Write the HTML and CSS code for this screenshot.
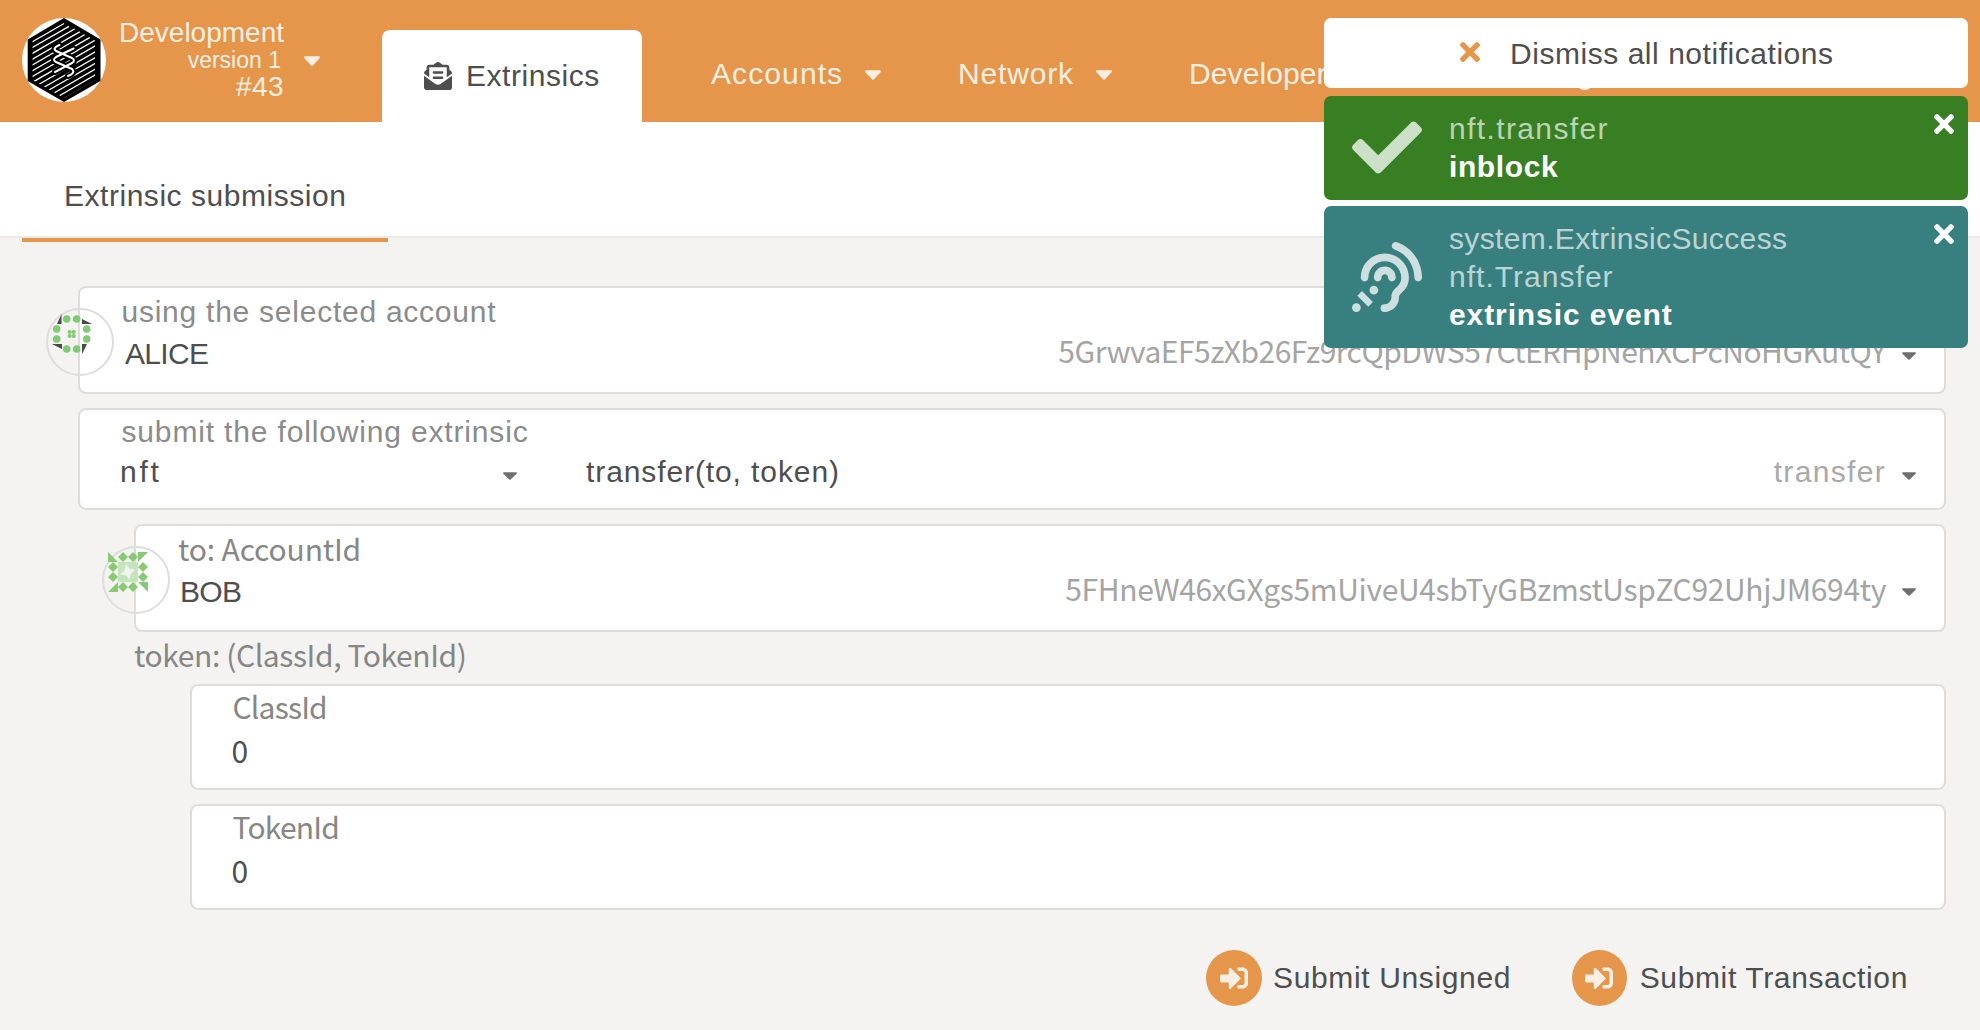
FILE: index.html
```html
<!DOCTYPE html>
<html lang="en">
<head>
<meta charset="utf-8">
<title>Extrinsics</title>
<link rel="stylesheet" href="styles.css">
</head>
<body>
<svg class="defs" width="0" height="0" aria-hidden="true">
  <symbol id="caret" viewBox="9 188 302 176" preserveAspectRatio="none"><path d="M31.3 192h257.3c17.8 0 26.7 21.5 14.1 34.1L174.1 354.8c-7.800 7.800-20.500 7.800-28.300 0L17.200 226.100C4.600 213.500 13.500 192 31.300 192z"/></symbol>
  <symbol id="times" viewBox="0 80 352 352"><path d="M242.720 256l100.070-100.070c12.280-12.280 12.280-32.190 0-44.480l-22.240-22.240c-12.280-12.280-32.190-12.280-44.480 0L176 189.280 75.930 89.210c-12.280-12.280-32.190-12.280-44.480 0L9.210 111.450c-12.280 12.280-12.280 32.190 0 44.480L109.280 256 9.210 356.070c-12.280 12.280-12.280 32.190 0 44.480l22.240 22.240c12.280 12.280 32.200 12.280 44.480 0L176 322.720l100.070 100.070c12.280 12.280 32.200 12.280 44.480 0l22.240-22.240c12.280-12.280 12.280-32.190 0-44.480L242.720 256z"/></symbol>
  <symbol id="sign-in" viewBox="0 0 512 512"><path d="M416 448h-84c-6.600 0-12-5.400-12-12v-40c0-6.600 5.400-12 12-12h84c17.700 0 32-14.300 32-32V160c0-17.700-14.300-32-32-32h-84c-6.600 0-12-5.400-12-12V76c0-6.600 5.400-12 12-12h84c53 0 96 43 96 96v192c0 53-43 96-96 96zm-47-201L201 79c-15-15-41-4.500-41 17v96H24c-13.300 0-24 10.700-24 24v96c0 13.300 10.700 24 24 24h136v96c0 21.500 26 32 41 17l168-168c9.300-9.400 9.300-24.600 0-34z"/></symbol>
</svg>

<header class="topbar">
  <svg class="logo" viewBox="0 0 84 84">
    <defs><clipPath id="inner"><path d="M42 4.500 73 22.500V62L42 80 10.500 62V22.500z"/></clipPath></defs>
    <circle cx="42" cy="42" r="42" fill="#fff"/>
    <path d="M42 0 78.500 21.500V63L42 84 5.700 63V21.500z"/>
    <g clip-path="url(#inner)" stroke="#fff" stroke-width="1.300">
      <path d="M10 24 42 5.500M10 29.800 47 8.400M10 35.600 53 10.700M10 41.400 58 13.600M10 47.200 63 16.500M10 53 68 19.400M10 58.800 74 21.700M10 64.600 74 27.500M14 68 74 33.300M19 71 74 39.100M24 73.800 74 44.900M29 76.800 74 50.700M34 79.700 74 56.500M40 82 74 62.300"/>
    </g>
    <g fill="none" stroke-linecap="round" stroke-linejoin="round">
      <g stroke="#000" stroke-width="6"><path d="M37.500 27Q30 30 34 33L50 40Q54 42.500 50 45L33 54"/><path d="M51.500 30.500 34 39Q30 42 34 44L50 51Q54 55 46 58"/></g>
      <g stroke="#fff" stroke-width="2"><path d="M37.500 27Q30 30 34 33L50 40Q54 42.500 50 45L33 54"/><path d="M51.500 30.500 34 39Q30 42 34 44L50 51Q54 55 46 58"/></g>
    </g>
  </svg>
  <div class="chain">
    <div class="chain-name">Development</div>
    <div class="chain-version">version 1</div>
    <div class="chain-block">#43</div>
  </div>
  <svg class="caret caret-chain"><use href="#caret"/></svg>
  <a class="tab-active">
    <svg class="tab-icon" viewBox="0 0 512 512"><path d="M176 216h160c8.840 0 16-7.160 16-16v-16c0-8.840-7.160-16-16-16H176c-8.840 0-16 7.160-16 16v16c0 8.840 7.160 16 16 16zm-16 80c0 8.840 7.160 16 16 16h160c8.840 0 16-7.160 16-16v-16c0-8.840-7.160-16-16-16H176c-8.840 0-16 7.160-16 16v16zm96 121.130c-16.420 0-32.840-5.060-46.860-15.190L0 250.860V464c0 26.510 21.490 48 48 48h416c26.510 0 48-21.490 48-48V250.860L302.860 401.940c-14.020 10.120-30.440 15.190-46.860 15.190zm237.610-254.180c-8.850-6.940-17.240-13.470-29.610-22.810V96c0-26.510-21.490-48-48-48h-77.550c-3.040-2.200-5.870-4.260-9.040-6.560C312.600 29.170 279.200-.35 256 0c-23.200-.35-56.590 29.170-73.410 41.440-3.170 2.300-6 4.360-9.040 6.560H96c-26.510 0-48 21.490-48 48v44.140c-12.370 9.330-20.760 15.870-29.610 22.810A47.995 47.995 0 0 0 0 200.720v10.650l96 69.350V96h320v184.720l96-69.350v-10.650c0-14.740-6.780-28.670-18.390-37.770z"/></svg>
    <span class="t-std">Extrinsics</span>
  </a>
  <nav class="nav">
    <a class="nav-item nav-accounts"><span>Accounts</span><svg class="caret"><use href="#caret"/></svg></a>
    <a class="nav-item nav-network"><span>Network</span><svg class="caret"><use href="#caret"/></svg></a>
    <a class="nav-item nav-developer"><span>Developer</span><svg class="caret"><use href="#caret"/></svg></a>
    <a class="nav-item"><span>Settings</span></a>
  </nav>
</header>

<div class="subbar"><a class="subtab">Extrinsic submission</a></div>

<main class="form">
  <section class="card card-account">
    <div class="identicon">
      <svg width="40" height="40" viewBox="0 0 40 40">
        <path fill="#484848" d="M9.500 0V10H5zM30 5 40 10H30zM0 30H10V35zM30 30H35L30 40z"/>
        <g fill="#7fcb74"><circle cx="14.700" cy="5" r="3.800"/><circle cx="24.700" cy="5" r="3.800"/><circle cx="4.700" cy="15" r="3.800"/><circle cx="4.700" cy="25" r="3.800"/><circle cx="34.700" cy="15" r="3.800"/><circle cx="34.700" cy="25" r="3.800"/><circle cx="14.700" cy="35" r="3.800"/><circle cx="24.700" cy="35" r="3.800"/><circle cx="17.700" cy="18" r="2.100"/><circle cx="21.700" cy="18" r="2.100"/><circle cx="17.700" cy="22" r="2.100"/><circle cx="21.700" cy="22" r="2.100"/></g>
      </svg>
    </div>
    <div class="label">using the selected account</div>
    <div class="row">
      <span class="value caps">ALICE</span>
      <span class="address addr-alice">5GrwvaEF5zXb26Fz9rcQpDWS57CtERHpNehXCPcNoHGKutQY</span>
      <svg class="caret-small"><use href="#caret"/></svg>
    </div>
  </section>

  <section class="card card-call">
    <div class="label l-submit">submit the following extrinsic</div>
    <div class="row">
      <span class="value module">nft</span>
      <svg class="caret-small"><use href="#caret"/></svg>
      <span class="value method">transfer(to, token)</span>
      <span class="method-name">transfer</span>
      <svg class="caret-small"><use href="#caret"/></svg>
    </div>
  </section>

  <div class="params">
    <section class="card card-to">
      <div class="identicon">
        <svg width="40" height="40" viewBox="0 0 40 40">
          <path fill="#87ca73" d="M0 0 10 10H0zM30 0H40L30 10zM0 40 10 30V40zM30 30H40V40z"/>
          <path fill="#87ca73" d="M15 0l5 5-5 5-5-5zM25 0l5 5-5 5-5-5zM5 10l5 5-5 5-5-5zM5 20l5 5-5 5-5-5zM35 10l5 5-5 5-5-5zM35 20l5 5-5 5-5-5zM15 30l5 5-5 5-5-5zM25 30l5 5-5 5-5-5z"/>
          <path fill="#c3e5b9" fill-rule="evenodd" d="M10 10H30V30H10zM18 12 16.500 18.500 12 22 18.500 23.500 21 28 23 21.500 28 18 21.500 16.500z"/>
        </svg>
      </div>
      <div class="label typed l-to">to: AccountId</div>
      <div class="row">
        <span class="value caps">BOB</span>
        <span class="address addr-bob">5FHneW46xGXgs5mUiveU4sbTyGBzmstUspZC92UhjJM694ty</span>
        <svg class="caret-small"><use href="#caret"/></svg>
      </div>
    </section>

    <div class="typed token-label">token: (ClassId, TokenId)</div>

    <div class="tuple">
      <section class="card card-num">
        <div class="label typed l-id">ClassId</div>
        <div class="number">0</div>
      </section>
      <section class="card card-num">
        <div class="label typed l-id">TokenId</div>
        <div class="number">0</div>
      </section>
    </div>
  </div>

  <div class="actions">
    <button class="btn btn-unsigned"><i class="disc"><svg><use href="#sign-in"/></svg></i><span>Submit Unsigned</span></button>
    <button class="btn btn-signed"><i class="disc"><svg><use href="#sign-in"/></svg></i><span>Submit Transaction</span></button>
  </div>
</main>

<aside class="toasts">
  <div class="dismiss"><svg><use href="#times"/></svg><span class="t-std">Dismiss all notifications</span></div>
  <div class="toast toast-ok">
    <svg class="toast-icon check" viewBox="0 64 512 384"><path d="M173.898 439.404l-166.400-166.400c-9.997-9.997-9.997-26.206 0-36.204l36.203-36.204c9.997-9.998 26.207-9.998 36.204 0L192 312.690 432.095 72.596c9.997-9.997 26.207-9.997 36.204 0l36.203 36.204c9.997 9.997 9.997 26.206 0 36.204l-294.400 294.401c-9.998 9.997-26.207 9.997-36.204-.001z"/></svg>
    <div class="toast-text"><p class="l-nft">nft.transfer</p><p class="status s-inblock">inblock</p></div>
    <svg class="close"><use href="#times"/></svg>
  </div>
  <div class="toast toast-event">
    <svg class="toast-icon" viewBox="0 0 512 512"><path d="M216 260c0 15.464-12.536 28-28 28s-28-12.536-28-28c0-44.112 35.888-80 80-80s80 35.888 80 80c0 15.464-12.536 28-28 28s-28-12.536-28-28c0-13.234-10.767-24-24-24s-24 10.766-24 24zm24-176c-97.047 0-176 78.953-176 176 0 15.464 12.536 28 28 28s28-12.536 28-28c0-66.168 53.832-120 120-120s120 53.832 120 120c0 75.164-71.009 70.311-71.997 143.622L288 404c0 28.673-23.327 52-52 52-15.464 0-28 12.536-28 28s12.536 28 28 28c59.475 0 107.876-48.328 108-107.774.595-34.428 72-48.240 72-144.226 0-97.047-78.953-176-176-176zm-80 236c-17.673 0-32 14.327-32 32s14.327 32 32 32 32-14.327 32-32-14.327-32-32-32zM32 448c-17.673 0-32 14.327-32 32s14.327 32 32 32 32-14.327 32-32-14.327-32-32-32zm480-187.993c0-1.518-.012-3.025-.045-4.531C510.076 140.525 436.157 38.470 327.994 1.511c-14.633-5.001-30.549 2.809-35.550 17.442-5 14.633 2.809 30.549 17.442 35.550 85.906 29.354 144.610 110.513 146.077 201.953l.003.188c.026 1.118.033 2.236.033 3.363 0 15.464 12.536 28 28 28s28.001-12.536 28.001-28zM152.971 439.029l-80-80L39.030 392.970l80 80 33.941-33.941z"/></svg>
    <div class="toast-text"><p>system.ExtrinsicSuccess</p><p class="l-nft2">nft.Transfer</p><p class="status">extrinsic event</p></div>
    <svg class="close"><use href="#times"/></svg>
  </div>
</aside>
</body>
</html>
```
FILE: styles.css
```css
* { box-sizing: border-box; }
body {
  margin: 0;
  height: 1030px;
  overflow: hidden;
  position: relative;
  background: #f4f3f1;
  color: #4e4e4e;
  font: 30px/40px "Liberation Sans", Arial, sans-serif;
}
p { margin: 0; }
svg { display: block; flex: none; }
.defs { position: absolute; }
.t-std { letter-spacing: 0.54px; white-space: nowrap; }

/* header */
.topbar { display: flex; height: 122px; padding-left: 22px; background: #e5964a; }
.logo { width: 84px; height: 84px; margin-top: 18px; }
.chain { width: 178px; padding-top: 17px; text-align: right; color: #fbefe4; white-space: nowrap; }
.chain-name { font-size: 28px; line-height: 32px; }
.chain-version { font-size: 23px; line-height: 23px; padding-right: 3px; }
.chain-block { font-size: 28px; line-height: 30px; letter-spacing: 0.4px; }
.caret { width: 16px; height: 10px; fill: #fbefe4; }
.caret-chain { margin: 56px 0 0 20px; }
.tab-active {
  display: flex;
  align-items: center;
  gap: 14px;
  width: 260px;
  height: 92px;
  margin: 30px 0 0 62px;
  padding-left: 42px;
  background: #fff;
  border-radius: 8px 8px 0 0;
}
.tab-icon { width: 28px; height: 28px; fill: #4e4e4e; }
.nav { display: flex; gap: 77px; margin-left: 69px; padding-top: 54px; color: #fbefe4; }
.nav-item { display: flex; height: 40px; letter-spacing: 0.83px; }
.nav-item .caret { margin-top: 16px; }
.nav-accounts span { width: 154px; letter-spacing: 1.1px; }
.nav-network span { width: 138px; }
.nav-developer span { width: 213px; letter-spacing: 0.1px; }

/* page tabs */
.subbar { height: 116px; padding-left: 22px; background: #fff; border-bottom: 2px solid #ebeae8; }
.subtab {
  display: block;
  width: 366px;
  height: 120px;
  padding: 54px 0 0 42px;
  border-bottom: 4px solid #e5964a;
  letter-spacing: 0.53px;
}

/* form */
.form { padding: 48px 34px 0 24px; }
.card {
  position: relative;
  margin-left: 54px;
  background: #fff;
  border: 2px solid #dddddc;
  border-radius: 8px;
}
.label { color: #8b8b8b; padding-left: 41.5px; letter-spacing: 0.75px; }
.l-submit { letter-spacing: 0.84px; }
.row { display: flex; align-items: flex-start; height: 40px; padding-right: 28px; }
.value { white-space: pre; }
.caps { letter-spacing: -0.7px; }
.address {
  margin-left: auto;
  color: #a4a4a4;
  font-family: "Noto Sans CJK JP", sans-serif;
  white-space: nowrap;
}
.addr-alice { letter-spacing: -0.51px; }
.addr-bob { letter-spacing: -0.34px; }
.caret-small { width: 14px; height: 8px; margin: 20px 0 0 17px; fill: #6f6f6f; }
.typed { font-family: "Noto Sans CJK JP", sans-serif; color: #868684; letter-spacing: -0.14px; white-space: nowrap; }

.card-account { height: 108px; padding-top: 4px; }
.card-account .row { margin-top: 2px; padding-left: 45px; }
.card-account .address { margin-top: -4px; margin-right: -1px; }
.card-account .caret-small { margin-top: 18px; }
.card-call { height: 102px; margin-top: 14px; padding-top: 2px; }
.card-call .row { padding-left: 40px; }
.module { width: 366px; letter-spacing: 2.8px; }
.method { margin-left: 69px; letter-spacing: 0.9px; }
.method-name { margin-left: auto; color: #a9a9a9; letter-spacing: 1.33px; }
.card-call .row > :last-child { margin-left: 16px; }

.identicon {
  position: absolute;
  left: -34px;
  top: 20px;
  width: 68px;
  height: 68px;
  border: 2px solid #dddddc;
  border-radius: 50%;
}
.identicon svg { margin: 4px 0 0 4px; }

.params { margin-top: 14px; border-left: 4px solid #f2f2f2; padding-left: 52px; }
.card-to { height: 108px; }
.l-to { padding-left: 42px; padding-top: 2px; }
.card-to .row { margin-top: 4px; padding-left: 44px; }
.card-to .address { margin-top: -4px; margin-right: -1px; }
.card-to .caret-small { margin-top: 16px; }
.token-label { height: 44px; padding: 2px 0 0 54px; letter-spacing: -0.4px; }
.tuple {
  display: flex;
  flex-direction: column;
  gap: 14px;
  padding: 8px 0 6px 52px;
  border-left: 4px solid #f2f2f2;
}
.card-num { height: 106px; }
.l-id { padding-left: 40.5px; letter-spacing: -0.8px; }
.number { margin-top: 4px; padding-left: 39.5px; font-family: "Noto Sans CJK JP", sans-serif; }

/* actions */
.actions { display: flex; justify-content: flex-end; padding: 34px 38px 0 0; }
.btn {
  display: flex;
  align-items: center;
  gap: 11px;
  padding: 0;
  border: 0;
  background: none;
  color: inherit;
  font: inherit;
  letter-spacing: 0.64px;
  white-space: nowrap;
}
.btn-unsigned { width: 366px; }
.btn-signed { width: 336px; gap: 13px; }
.disc { display: grid; place-items: center; width: 56px; height: 56px; border-radius: 50%; background: #e5964a; }
.disc svg { width: 28px; height: 28px; fill: #fbefe4; }

/* notifications float over the page */
.toasts { position: absolute; left: 1324px; top: 18px; width: 644px; }
.dismiss {
  display: flex;
  align-items: center;
  gap: 30px;
  height: 70px;
  padding: 2px 0 0 136px;
  border-radius: 7px;
  background: #fff;
}
.dismiss svg { width: 20px; height: 20px; margin-bottom: 4px; fill: #e5964a; }
.toast {
  display: flex;
  align-items: center;
  margin-top: 8px;
  padding: 0 14px 0 28px;
  border-radius: 7px;
  color: #fff;
  line-height: 38px;
}
.toast-ok { height: 104px; background: #377f22; }
.toast-event { height: 142px; margin-top: 6px; background: #387f80; }
.toast-icon { width: 70px; height: 70px; fill: rgba(255, 255, 255, 0.75); }
.check { height: 53px; margin-bottom: 2px; }
.toast-text { flex: 1; padding: 0 0 1px 27px; color: rgba(255, 255, 255, 0.68); letter-spacing: 0.36px; }
.l-nft { letter-spacing: 1.38px; }
.l-nft2 { letter-spacing: 1.03px; }
.status { color: #fff; font-weight: 700; letter-spacing: 0.9px; }
.s-inblock { letter-spacing: 0.6px; }
.close { align-self: flex-start; width: 20px; height: 20px; margin-top: 18px; fill: #fff; }
```
